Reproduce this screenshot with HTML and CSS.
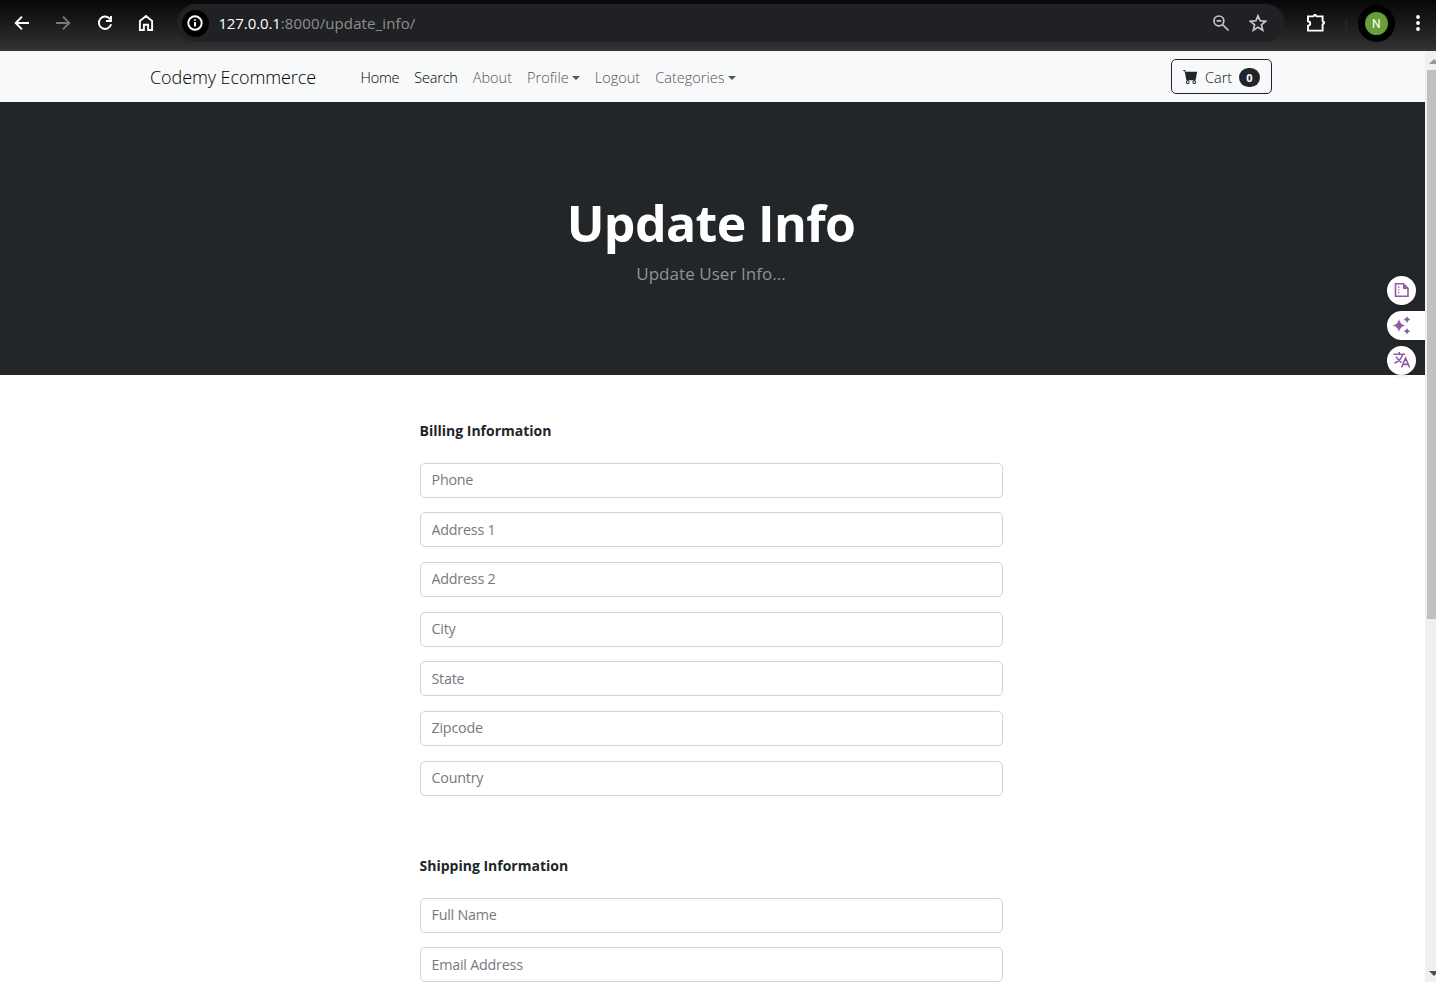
FILE: index.html
```html
<!DOCTYPE html>
<html lang="en">
<head>
    <meta charset="utf-8">
    <title>Update Info</title>
    <link rel="stylesheet" href="styles.css">
</head>
<body>
    <!-- Browser toolbar -->
    <div class="toolbar">
        <div class="toolbar-nav">
            <svg width="18" height="18" viewBox="0 0 18 18"><path d="M16 9H3M9 2.7L2.7 9L9 15.3"/></svg>
            <svg class="disabled" width="18" height="18" viewBox="0 0 18 18"><path d="M2 9h13M9 2.7L15.3 9L9 15.3"/></svg>
            <svg width="18" height="18" viewBox="0 0 18 18"><path d="M14.2 5.2A6.2 6.2 0 1 0 15.1 10.2M15 2v5h-5"/></svg>
            <svg width="18" height="18" viewBox="0 0 18 18"><path d="M2.9 16V6.9L9 2l6.1 4.9V16h-4v-5.3H6.9V16z"/></svg>
        </div>
        <div class="address-bar">
            <span class="site-info">
                <svg width="18" height="18" viewBox="0 0 18 18"><circle cx="9" cy="9" r="6.7"/><path d="M9 8v4.6M9 5.2v1.6"/></svg>
            </span>
            <span class="url"><b>127.0.0.1</b><span class="path">:8000/update_info/</span></span>
            <svg class="zoom-icon" width="18" height="18" viewBox="0 0 18 18"><circle cx="6.9" cy="6.9" r="4.9"/><path d="M10.5 10.5l6 6M4.6 6.9h4.6"/></svg>
            <svg class="star-icon" width="18" height="18" viewBox="0 0 18 18"><path d="M9 1.8l2.1 5 5.4.5-4.1 3.5 1.3 5.3L9 13.2l-4.7 2.9 1.3-5.3-4.1-3.5 5.4-.5z"/></svg>
        </div>
        <svg class="ext-icon" width="22" height="22" viewBox="0 0 22 22"><path d="M3 4.4h5.2q1.8-2 3.4 0h6V9q2 1.7 0 3.4v6.2H3v-4.8c3-.5 3-4.1 0-4.6z"/><path class="knob" d="M8 4a2 2 0 0 1 4 0zM18 8.7a2 2 0 0 1 0 4z"/></svg>
        <span class="separator"></span>
        <span class="avatar"><span>N</span></span>
        <svg class="menu-icon" width="6" height="20" viewBox="0 0 6 20"><circle cx="3" cy="4" r="1.9"/><circle cx="3" cy="10" r="1.9"/><circle cx="3" cy="16" r="1.9"/></svg>
    </div>

    <div class="window">
        <div class="page">
            <!-- Navigation -->
            <nav class="navbar">
                <a class="navbar-brand">Codemy Ecommerce</a>
                <ul class="nav-links">
                    <li class="active">Home</li>
                    <li class="active">Search</li>
                    <li>About</li>
                    <li class="dropdown">Profile</li>
                    <li>Logout</li>
                    <li class="dropdown">Categories</li>
                </ul>
                <button class="btn-cart">
                    <svg width="15" height="15" viewBox="0 0 16 16"><path d="M0 1.5A.5.5 0 0 1 .5 1H2a.5.5 0 0 1 .485.379L2.89 3H14.5a.5.5 0 0 1 .491.592l-1.5 8A.5.5 0 0 1 13 12H4a.5.5 0 0 1-.491-.408L2.01 3.607 1.61 2H.5a.5.5 0 0 1-.5-.5zM5 12a2 2 0 1 0 0 4 2 2 0 0 0 0-4zm7 0a2 2 0 1 0 0 4 2 2 0 0 0 0-4zm-7 1a1 1 0 1 1 0 2 1 1 0 0 1 0-2zm7 0a1 1 0 1 1 0 2 1 1 0 0 1 0-2z"/></svg>
                    <span class="cart-label">Cart</span>
                    <span class="badge">0</span>
                </button>
            </nav>

            <!-- Header -->
            <header class="hero">
                <h1>Update Info</h1>
                <p>Update User Info...</p>
            </header>

            <form class="info-form">
                <h5>Billing Information</h5>
                <input type="text" placeholder="Phone">
                <input type="text" placeholder="Address 1">
                <input type="text" placeholder="Address 2">
                <input type="text" placeholder="City">
                <input type="text" placeholder="State">
                <input type="text" placeholder="Zipcode">
                <input type="text" placeholder="Country">

                <h5 class="shipping">Shipping Information</h5>
                <input type="text" placeholder="Full Name">
                <input type="text" placeholder="Email Address">
            </form>

            <!-- Floating extension buttons -->
            <div class="side-tools">
                <span class="tool">
                    <svg width="16" height="16" viewBox="0 0 16 16"><path class="line" d="M1.5 1.8h8L14 6.3v7.9H1.5z"/><path d="M9 2v5h5zM4 4.6h1.3v1.3H4zM4 7.3h1.3v1.3H4zM4 10h1.3v1.3H4z"/></svg>
                </span>
                <span class="tool wide">
                    <svg width="19" height="19" viewBox="0 0 19 19"><path d="M7 3Q8 8.5 13.2 9.5Q8 10.5 7 16Q6 10.5.5 9.5Q6 8.5 7 3zM15 .3Q15.7 3 18.3 3.6Q15.7 4.2 15 6.9Q14.3 4.2 11.7 3.6Q14.3 3 15 .3zM15 11.9Q15.7 14.6 18.3 15.2Q15.7 15.8 15 18.5Q14.3 15.8 11.7 15.2Q14.3 14.6 15 11.9z"/></svg>
                </span>
                <span class="tool">
                    <svg width="18" height="18" viewBox="0 0 18 18"><path class="line" d="M.5 3.2H12M6.2 1v2.2M9.8 3.2C8.8 7 5.5 10.3 1.5 12.3M3 5.5c1.2 2.4 3.2 4.5 5.5 6M8.6 16.5L12.6 7 16.6 16.5M10 13.4h5.2"/></svg>
                </span>
            </div>
        </div>
        <div class="scrollbar">
            <span class="arrow-up"></span>
            <span class="thumb"></span>
            <span class="arrow-down"></span>
        </div>
    </div>
</body>
</html>
```
FILE: styles.css
```css
* {
    box-sizing: border-box;
}
body {
    margin: 0;
    height: 982px;
    overflow: hidden;
    font-family: "Open Sans", sans-serif;
    font-size: 14px;
    color: #212529;
    background: #fff;
}

/* Browser toolbar */
.toolbar {
    display: flex;
    align-items: center;
    height: 51px;
    padding: 0 15px 5px 13px;
    background: linear-gradient(#080808 0, #161616 18px, #303030 48px, #383838 51px);
}
.toolbar svg {
    fill: none;
    stroke: #fff;
    stroke-width: 1.9;
    flex-shrink: 0;
}
.toolbar-nav {
    display: flex;
    gap: 23.3px;
}
.toolbar svg.disabled {
    stroke: #777;
}
.address-bar {
    display: flex;
    align-items: center;
    width: 1108px;
    height: 38px;
    margin-left: 22px;
    padding: 0 18px 0 5px;
    border-radius: 19px;
    background: #202124;
}
.site-info {
    display: flex;
    align-items: center;
    justify-content: center;
    width: 27px;
    height: 27px;
    border-radius: 50%;
    background: #000;
}
.url {
    flex: 1;
    margin-left: 9.5px;
    font-size: 15px;
    color: #fff;
}
.url b {
    font-weight: 400;
    letter-spacing: -0.1px;
}
.url .path {
    color: #8e8f91;
    letter-spacing: 0.12px;
}
.toolbar .zoom-icon,
.toolbar .star-icon {
    stroke: #c7c7c7;
    stroke-width: 1.7;
}
.star-icon {
    margin-left: 19px;
}
.ext-icon {
    margin-left: 20px;
}
.ext-icon .knob {
    fill: #fff;
    stroke: none;
}
.separator {
    width: 2px;
    height: 12px;
    margin: 5px 11px 0 18px;
    background: #252525;
}
.avatar {
    display: flex;
    align-items: center;
    justify-content: center;
    width: 37px;
    height: 37px;
    border-radius: 50%;
    background: #000;
}
.avatar span {
    width: 23px;
    height: 23px;
    border-radius: 50%;
    background: #689f38;
    color: #fff;
    font: 12px/24px Roboto, sans-serif;
    text-align: center;
}
.toolbar .menu-icon {
    margin-left: 20px;
    fill: #fff;
    stroke: none;
}

.window {
    display: flex;
    height: 931px;
}
.page {
    position: relative;
    width: 1425px;
    overflow: hidden;
}

/* Navigation */
.navbar {
    display: flex;
    align-items: center;
    height: 51px;
    padding: 0 153px 0 150px;
    background: #f8f9fa;
    font-weight: 300;
}
.navbar-brand {
    width: 210.5px;
    padding-top: 1px;
    color: #000;
    font-size: 18px;
    letter-spacing: -0.08px;
}
.nav-links {
    display: flex;
    flex: 1;
    gap: 15px;
    margin: 0;
    padding: 2px 0 0;
    list-style: none;
    color: #555;
    font-size: 14.5px;
    letter-spacing: 0.02px;
}
.nav-links .active {
    color: #000;
    letter-spacing: -0.22px;
}
.dropdown::after {
    content: "";
    display: inline-block;
    margin-left: 3px;
    vertical-align: 3px;
    border: 4px solid transparent;
    border-top-color: #555;
    border-bottom: 0;
}
.btn-cart {
    display: flex;
    align-items: center;
    width: 101px;
    height: 35px;
    margin-bottom: 1px;
    padding: 0 11px;
    border: 1px solid #212529;
    border-radius: 5px;
    background: transparent;
    color: #111;
    font: 300 14.5px "Open Sans", sans-serif;
}
.btn-cart svg {
    fill: #212529;
}
.cart-label {
    margin-left: 7px;
    padding-top: 2px;
}
.badge {
    width: 21px;
    height: 19px;
    margin: 2px 0 0 auto;
    border-radius: 10px;
    background: #212529;
    color: #fff;
    font-size: 11px;
    font-weight: 700;
    line-height: 19px;
}

/* Header */
.hero {
    height: 273px;
    padding-top: 88px;
    background: #222628;
    text-align: center;
}
.hero h1 {
    margin: 0 3px 0 0;
    color: #fff;
    font-size: 50px;
    font-weight: 700;
    letter-spacing: -0.6px;
    line-height: 66px;
}
.hero p {
    margin: 5px 3px 0 0;
    color: #909294;
    font-size: 17px;
    letter-spacing: 0.05px;
    line-height: 25px;
}

/* Form */
.info-form {
    width: 583px;
    margin: 45px 0 0 420px;
}
.info-form h5 {
    margin: 0 0 21.8px -0.5px;
    font-size: 14px;
    font-weight: 700;
    line-height: 21px;
}
.info-form h5.shipping {
    margin-top: 59.2px;
}
.info-form input {
    display: block;
    width: 100%;
    height: 35px;
    margin-bottom: 14.67px;
    padding: 0 10.5px 1.4px;
    border: 1px solid #ced4da;
    border-radius: 5px;
    background: #fff;
    font: 14.3px "Open Sans", sans-serif;
    letter-spacing: -0.22px;
}
.info-form input::placeholder {
    color: #747a80;
}

/* Floating extension buttons */
.side-tools {
    position: absolute;
    top: 224.5px;
    right: 0;
    display: flex;
    flex-direction: column;
    gap: 6px;
    width: 38px;
}
.tool {
    display: flex;
    align-items: center;
    justify-content: center;
    width: 29px;
    height: 29px;
    border-radius: 50%;
    background: #fff;
    box-shadow: 0 1px 4px rgba(0,0,0,0.12);
}
.tool.wide {
    width: 38px;
    justify-content: flex-start;
    padding-left: 5px;
    border-radius: 15px 0 0 15px;
}
.tool svg {
    fill: #8e5bab;
}
.tool .line {
    fill: none;
    stroke: #8e5bab;
    stroke-width: 1.6;
}

.scrollbar {
    display: flex;
    flex-direction: column;
    width: 11px;
    padding: 8px 0 6px 2px;
    overflow: hidden;
    background: #f0f0f0;
}
.scrollbar span {
    flex-shrink: 0;
}
.arrow-up,
.arrow-down {
    width: 10px;
    margin-left: 2px;
    border: 5px solid transparent;
}
.arrow-up {
    border-top: 0;
    border-bottom-color: #999;
}
.thumb {
    height: 549px;
    margin-top: 6px;
    background: #c1c1c1;
}
.arrow-down {
    margin-top: auto;
    border-bottom: 0;
    border-top-color: #505050;
}
```
